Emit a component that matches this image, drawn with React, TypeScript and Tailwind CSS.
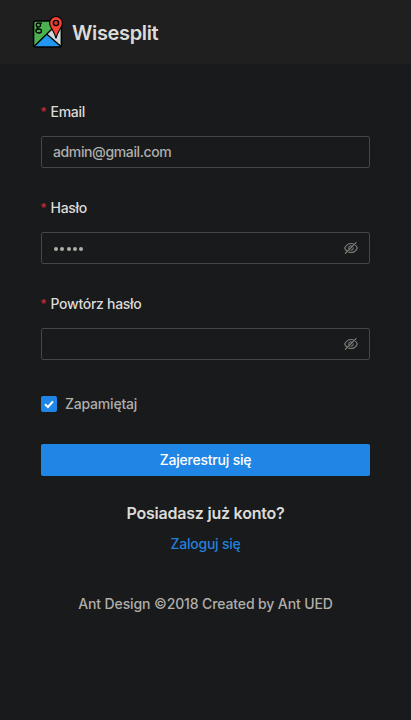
import { useState } from "react";
import { AiOutlineEyeInvisible } from "react-icons/ai";

function Logo() {
  return (
    <svg width="32" height="32" viewBox="0 0 32 32" className="shrink-0">
      <rect x="1.6" y="5" width="27.8" height="26" rx="2" fill="#4caf50" />
      <path d="M28.8 6v23.5L15.2 18.5 24 9z" fill="#cfd8dc" />
      <path d="M2.5 31 15.2 18.5 28.5 31z" fill="#2196f3" />
      <path d="M2 30.5 20 13M15.2 18.5 29 30.5" stroke="#000" strokeWidth="1.3" fill="none" />
      <rect x="1.6" y="5" width="27.8" height="26" rx="2" fill="none" stroke="#000" strokeWidth="1.5" />
      <g fill="none" stroke="#000" strokeWidth="1.3">
        <circle cx="6.4" cy="9.1" r="2.1" />
        <path d="M8 7.4 10 6.8M6.2 11.3c-1.9.6-1.2 1.6 0 1.8" />
        <ellipse cx="6.7" cy="15" rx="2.8" ry="2" />
      </g>
      <path
        d="M24 .5a6.4 6.4 0 0 0-6.4 6.4c0 1.8.6 3.1 1.6 4.9 2 3.4 3.8 6.4 4.8 10.6 1-4.2 2.8-7.2 4.8-10.6 1-1.8 1.6-3.1 1.6-4.9A6.4 6.4 0 0 0 24 .5z"
        fill="#f44336"
        stroke="#000"
        strokeWidth="1.1"
      />
      <circle cx="24" cy="7" r="2.6" fill="#d8392e" stroke="#000" strokeWidth="1.4" />
    </svg>
  );
}

function Label({ text }: { text: string }) {
  return (
    <label className="flex h-6 items-center text-[14px] leading-6 tracking-[-0.28px] text-[#dcdbd9]">
      <span className="mr-1 w-[5.5px] font-['Liberation_Sans',sans-serif] text-[13px] font-bold tracking-normal text-[#b52b2f]">
        *
      </span>
      {text}
    </label>
  );
}

const inputBox =
  "mt-3 flex h-8 w-full items-center rounded-[2px] border border-[#434749] px-[11px] text-[14px] text-[#b0aeab]";

function PasswordField({ value }: { value: number }) {
  return (
    <div className={inputBox}>
      <div className="flex flex-1 gap-[2.3px] pl-px pt-0.5">
        {Array.from({ length: value }, (_, i) => (
          <span key={i} className="size-1 rounded-full bg-[#b0aeab]" />
        ))}
      </div>
      <AiOutlineEyeInvisible size={16} className="-mr-px text-[#7e7c78]" />
    </div>
  );
}

export default function App() {
  const [checked, setChecked] = useState(true);
  return (
    <div className="flex h-[720px] w-full flex-col bg-[#181a1b] font-['Inter',sans-serif] text-[14px] font-[450] text-[#b0aeab]">
      <header className="flex h-16 items-center bg-[#1f1f1f] px-8">
        <Logo />
        <h1 className="ml-2 pt-0.5 text-[20px] leading-7 font-semibold tracking-[-0.36px] text-[#dcdbd9]">Wisesplit</h1>
      </header>
      <main className="px-[41px] pt-9">
        <Label text="Email" />
        <div className={inputBox}>
          <span className="pb-0.5 tracking-[-0.38px]">admin@gmail.com</span>
        </div>
        <div className="mt-7">
          <Label text="Hasło" />
          <PasswordField value={5} />
        </div>
        <div className="mt-7">
          <Label text="Powtórz hasło" />
          <PasswordField value={0} />
        </div>
        <div className="mt-8 flex h-6 cursor-pointer items-center" onClick={() => setChecked(!checked)}>
          <span className="flex size-4 items-center justify-center rounded-[2px] bg-[#1f86e5]">
            {checked && (
              <svg width="12" height="12" viewBox="0 0 12 12">
                <path d="M2 6.3 4.9 9 10 3.4" fill="none" stroke="#fff" strokeWidth="2" />
              </svg>
            )}
          </span>
          <span className="ml-2 pb-0.5 tracking-[-0.2px]">Zapamiętaj</span>
        </div>
        <button className="mt-7 block h-8 w-full rounded-[2px] bg-[#1f86e5] pb-0.5 text-[14px] tracking-[-0.2px] text-white">
          Zajerestruj się
        </button>
        <h2 className="mt-[25px] text-center text-[16px] leading-6 font-semibold tracking-[-0.22px] text-[#dcdbd9]">
          Posiadasz już konto?
        </h2>
        <div className="mt-2 text-center leading-[22px] tracking-[-0.22px] text-[#2380dd]">Zaloguj się</div>
      </main>
      <footer className="mt-[38px] text-center leading-[22px] tracking-[-0.12px]">
        Ant Design ©2018 Created by Ant UED
      </footer>
    </div>
  );
}
